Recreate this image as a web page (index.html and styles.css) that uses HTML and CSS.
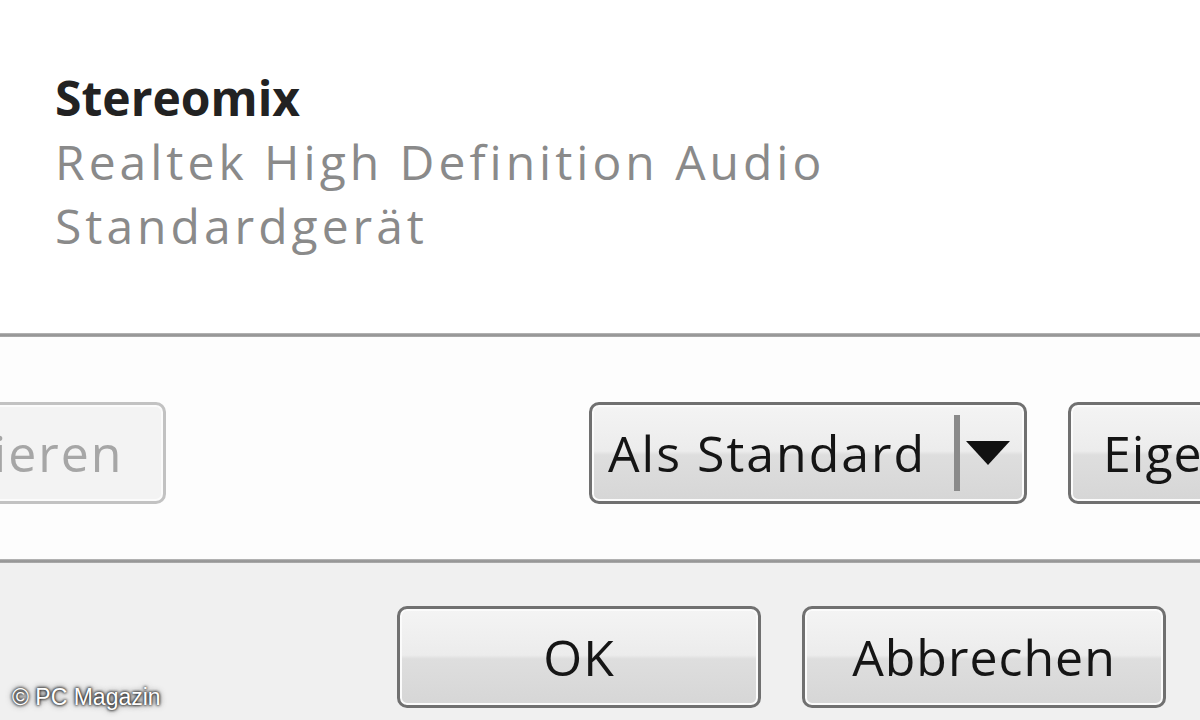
FILE: index.html
```html
<!DOCTYPE html>
<html lang="de">
<head>
<meta charset="utf-8">
<title>Sound</title>
<link rel="stylesheet" href="styles.css">
</head>
<body>
<div class="screen">
  <section class="device">
    <div class="device-name">Stereomix</div>
    <div class="device-sub">Realtek High Definition Audio</div>
    <div class="device-sub">Standardgerät</div>
  </section>
  <div class="rule"></div>
  <section class="actions">
    <button class="btn btn-disabled btn-config">Konfigurieren</button>
    <div class="spacer"></div>
    <button class="btn btn-split"><span class="split-label">Als Standard</span><span class="split-sep"></span><span class="split-arrow"></span></button>
    <button class="btn btn-props">Eigenschaften</button>
  </section>
  <div class="rule rule-bottom"></div>
  <footer class="footer">
    <button class="btn btn-dialog">OK</button>
    <button class="btn btn-dialog">Abbrechen</button>
  </footer>
  <div class="watermark">© PC Magazin</div>
</div>
</body>
</html>
```
FILE: styles.css
```css
html, body {
  margin: 0;
  padding: 0;
  width: 1200px;
  height: 720px;
  overflow: hidden;
  background: #f0f0f0;
}

.screen {
  position: relative;
  width: 1200px;
  height: 720px;
  display: flex;
  flex-direction: column;
  font-family: "Open Sans", "Noto Sans", sans-serif;
}

.device {
  height: 333px;
  box-sizing: border-box;
  background: #ffffff;
  padding: 66px 0 0 55px;
  font-size: 48px;
  line-height: 64px;
}

.device-name {
  font-weight: 700;
  color: #222222;
}

.device-sub {
  color: #8a8a8a;
  letter-spacing: 4px;
}

.rule {
  height: 4px;
  background: linear-gradient(#bdbdbd, #8f8f8f 50%, #b0b0b0);
}

.actions {
  height: 222px;
  box-sizing: border-box;
  background: #fdfdfd;
  display: flex;
  align-items: flex-start;
  padding-top: 65px;
}

.spacer {
  flex: 1;
}

.btn {
  box-sizing: border-box;
  height: 102px;
  border: 3px solid #707070;
  border-radius: 10px;
  background: linear-gradient(#f4f4f4 0%, #ececec 48%, #dedede 52%, #d6d6d6 100%);
  box-shadow: inset 0 0 0 2px #fbfbfb;
  font-family: "Open Sans", "Noto Sans", sans-serif;
  font-size: 50px;
  letter-spacing: 1px;
  color: #151515;
  padding: 0;
  flex: none;
  display: flex;
  align-items: center;
  justify-content: center;
}

.btn-disabled {
  border-color: #c2c2c2;
  background: #f3f3f3;
  color: #a6a6a6;
}

.btn-config {
  width: 400px;
  margin-left: -234px;
  padding-right: 30px;
  letter-spacing: 2px;
}

.btn-split {
  width: 438px;
  justify-content: flex-start;
  padding: 0 14px 0 16px;
}

.split-label {
  flex: 1;
  text-align: left;
  letter-spacing: 2px;
}

.split-sep {
  width: 6px;
  height: 76px;
  background: #8a8a8a;
  margin-right: 6px;
}

.split-arrow {
  width: 0;
  height: 0;
  border-left: 22px solid transparent;
  border-right: 22px solid transparent;
  border-top: 24px solid #111111;
}

.btn-props {
  width: 360px;
  margin-left: 41px;
  margin-right: -228px;
  justify-content: flex-start;
  padding-left: 32px;
}

.footer {
  flex: 1;
  background: #f0f0f0;
  display: flex;
  align-items: flex-start;
  justify-content: flex-end;
  gap: 41px;
  padding: 43px 34px 0 0;
}

.btn-dialog {
  width: 364px;
}

.watermark {
  position: absolute;
  left: 12px;
  bottom: 9px;
  font-family: "Liberation Sans", Arial, sans-serif;
  font-size: 23px;
  color: #ffffff;
  text-shadow: 0 0 3px #222, 0 0 3px #222, 0 0 6px #444;
}
```
